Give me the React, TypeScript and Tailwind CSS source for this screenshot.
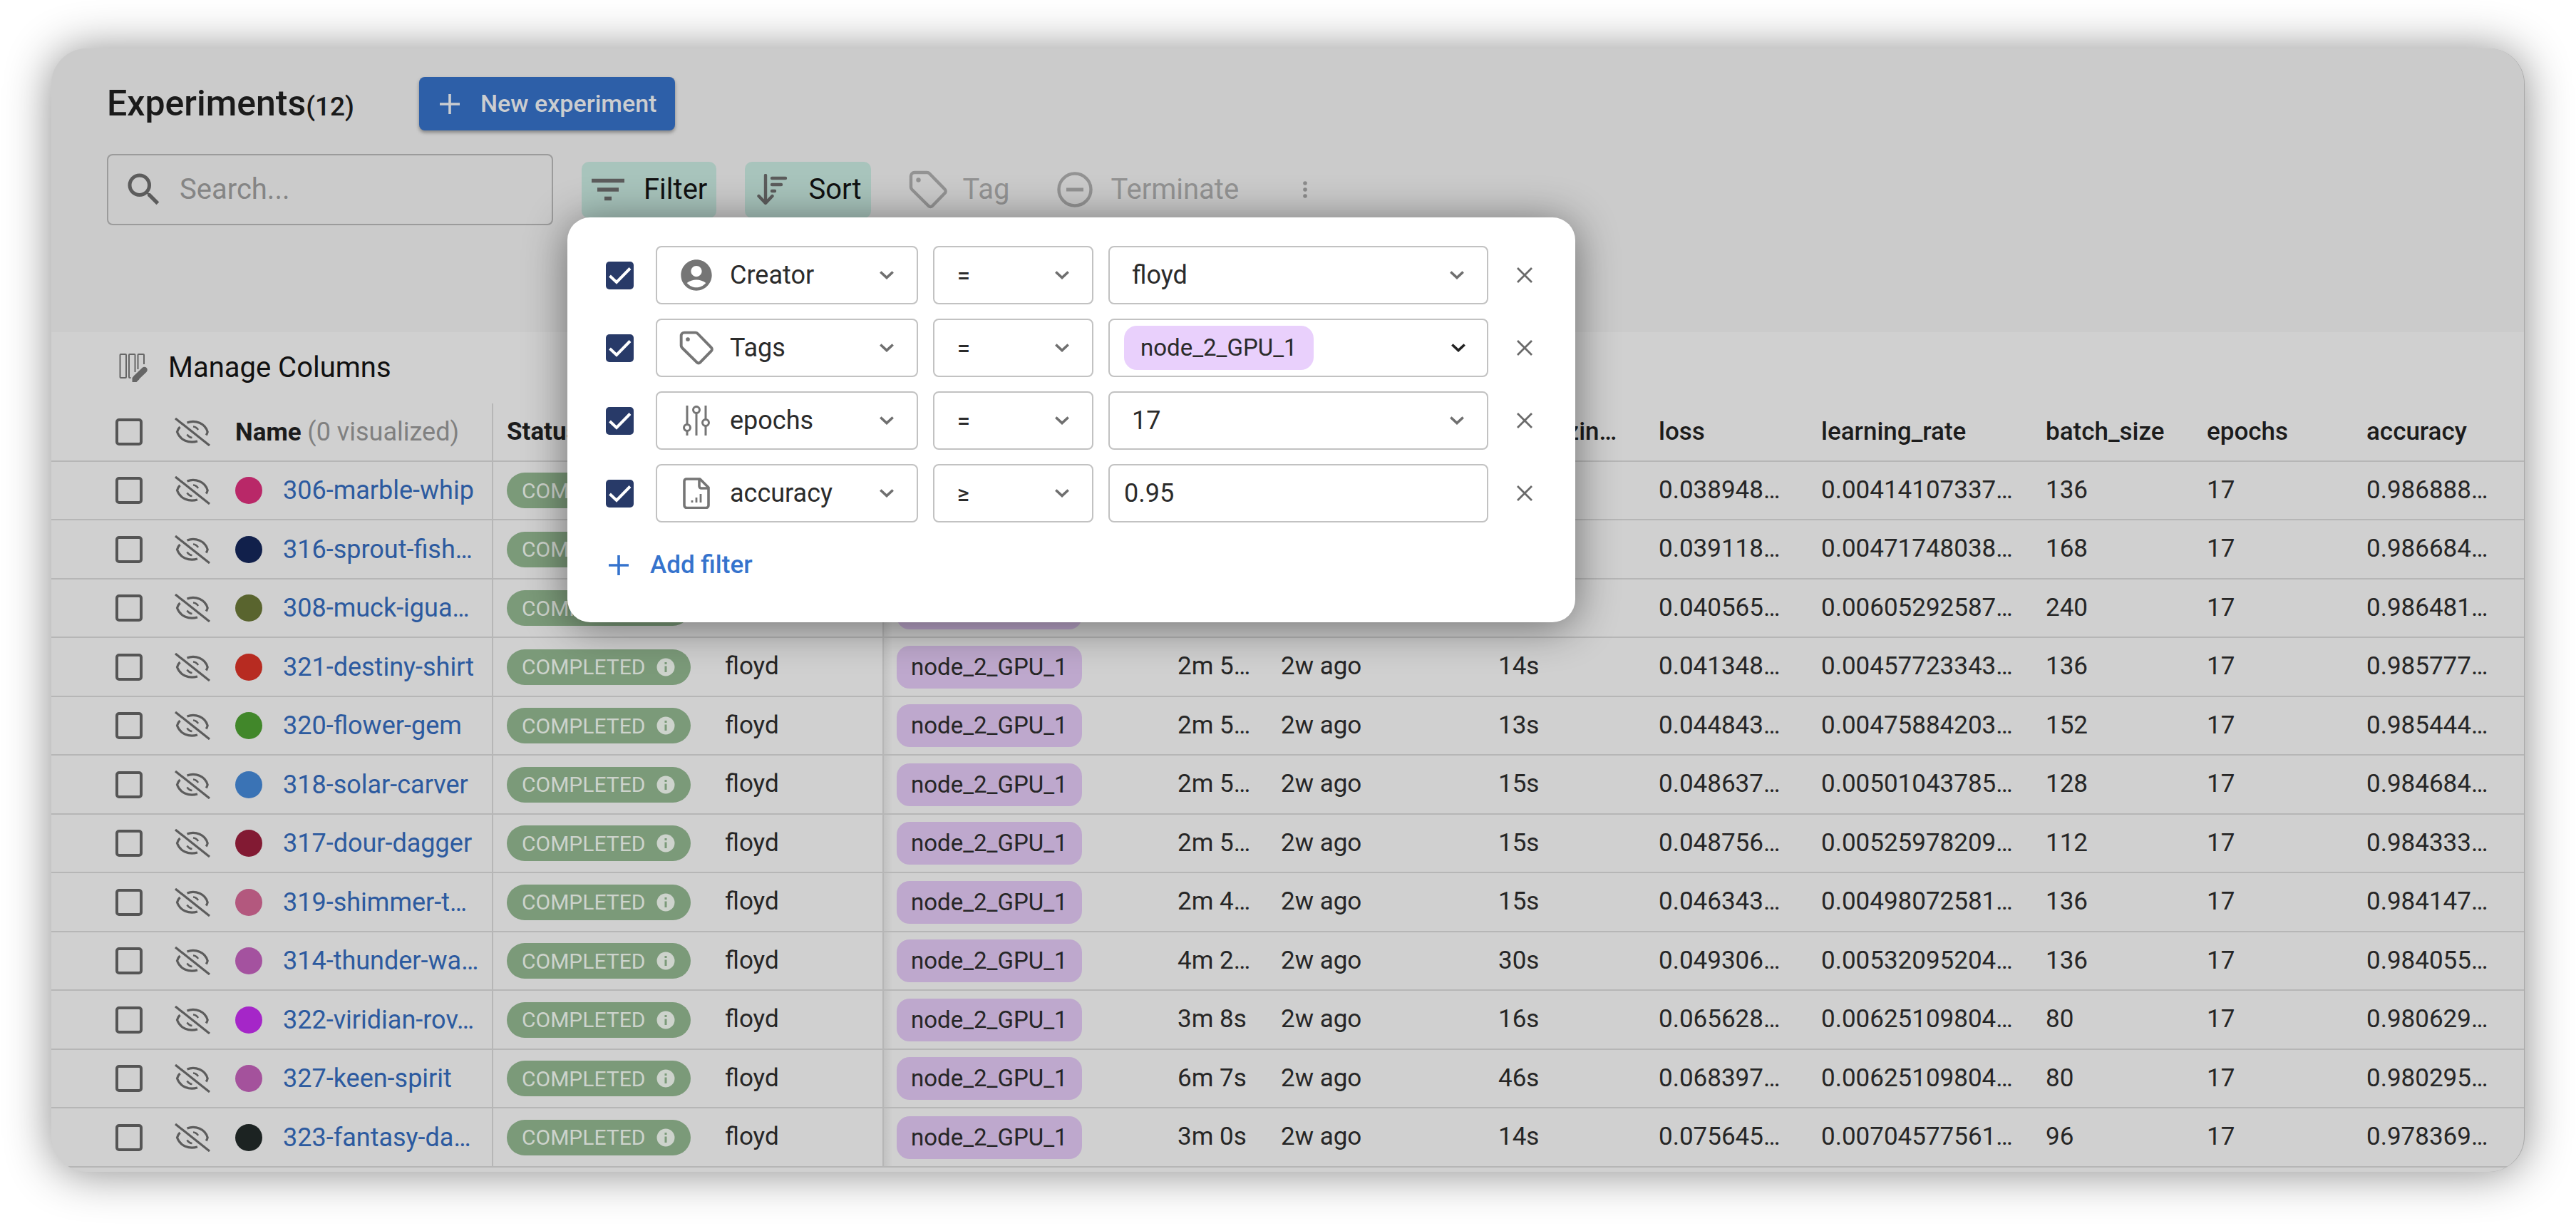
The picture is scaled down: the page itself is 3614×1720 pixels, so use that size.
import type { ReactNode } from "react";
import { MdAccountCircle, MdSearch } from "react-icons/md";

type Experiment = {
  name: string;
  dot: string;
  duration: string;
  init: string;
  loss: string;
  rate: string;
  batch: string;
  accuracy: string;
};

const experiments: Experiment[] = [
  { name: "306-marble-whip", dot: "bg-[#b92868]", duration: "2m 5…", init: "14s", loss: "0.038948…", rate: "0.00414107337…", batch: "136", accuracy: "0.986888…" },
  { name: "316-sprout-fish…", dot: "bg-[#11204b]", duration: "2m 5…", init: "14s", loss: "0.039118…", rate: "0.00471748038…", batch: "168", accuracy: "0.986684…" },
  { name: "308-muck-igua…", dot: "bg-[#59642e]", duration: "2m 5…", init: "15s", loss: "0.040565…", rate: "0.00605292587…", batch: "240", accuracy: "0.986481…" },
  { name: "321-destiny-shirt", dot: "bg-[#b72b21]", duration: "2m 5…", init: "14s", loss: "0.041348…", rate: "0.00457723343…", batch: "136", accuracy: "0.985777…" },
  { name: "320-flower-gem", dot: "bg-[#41872a]", duration: "2m 5…", init: "13s", loss: "0.044843…", rate: "0.00475884203…", batch: "152", accuracy: "0.985444…" },
  { name: "318-solar-carver", dot: "bg-[#3a73b5]", duration: "2m 5…", init: "15s", loss: "0.048637…", rate: "0.00501043785…", batch: "128", accuracy: "0.984684…" },
  { name: "317-dour-dagger", dot: "bg-[#821a33]", duration: "2m 5…", init: "15s", loss: "0.048756…", rate: "0.00525978209…", batch: "112", accuracy: "0.984333…" },
  { name: "319-shimmer-t…", dot: "bg-[#b3587e]", duration: "2m 4…", init: "15s", loss: "0.046343…", rate: "0.00498072581…", batch: "136", accuracy: "0.984147…" },
  { name: "314-thunder-wa…", dot: "bg-[#a4529f]", duration: "4m 2…", init: "30s", loss: "0.049306…", rate: "0.00532095204…", batch: "136", accuracy: "0.984055…" },
  { name: "322-viridian-rov…", dot: "bg-[#a526c8]", duration: "3m 8s", init: "16s", loss: "0.065628…", rate: "0.00625109804…", batch: "80", accuracy: "0.980629…" },
  { name: "327-keen-spirit", dot: "bg-[#a4529c]", duration: "6m 7s", init: "46s", loss: "0.068397…", rate: "0.00625109804…", batch: "80", accuracy: "0.980295…" },
  { name: "323-fantasy-da…", dot: "bg-[#1c2322]", duration: "3m 0s", init: "14s", loss: "0.075645…", rate: "0.00704577561…", batch: "96", accuracy: "0.978369…" },
];

function PlusIcon({ className }: { className?: string }) {
  return (
    <svg viewBox="0 0 28 28" className={className} fill="none" stroke="currentColor" strokeWidth="3.6" aria-hidden="true">
      <path d="M14 0v28M0 14h28" />
    </svg>
  );
}

function ChevronIcon({ className }: { className?: string }) {
  return (
    <svg viewBox="0 0 20 12" className={className} fill="none" stroke="currentColor" strokeWidth="3.6" aria-hidden="true">
      <path d="M1.3 1.5 10 9.6l8.700-8.100" />
    </svg>
  );
}

function CloseIcon() {
  return (
    <svg viewBox="0 0 22 22" className="size-[22px]" fill="none" stroke="currentColor" strokeWidth="2.8" aria-hidden="true">
      <path d="M1 1l20 20M21 1 1 21" />
    </svg>
  );
}

function TagIcon({ className }: { className?: string }) {
  return (
    <svg viewBox="0 0 54 54" className={className} fill="none" stroke="currentColor" strokeWidth="4.4" strokeLinejoin="round" aria-hidden="true">
      <path d="M3 8a5 5 0 0 1 5-5h17.500a5 5 0 0 1 3.500 1.500L50.500 26.500a4 4 0 0 1 0 5.500L33 50a3.600 3.600 0 0 1-5.200 0L4.500 27A5 5 0 0 1 3 23.500Z" />
      <circle cx="13.500" cy="13.500" r="3.200" fill="currentColor" stroke="none" />
    </svg>
  );
}

function FilterIcon() {
  return (
    <svg viewBox="0 0 48 34" className="h-[34px] w-12" stroke="currentColor" strokeWidth="5.400" aria-hidden="true">
      <path d="M1 4.500h46M9 17h30M19 29.500h10" />
    </svg>
  );
}

function SortIcon() {
  return (
    <svg viewBox="0 0 48 44" className="h-11 w-12" fill="none" stroke="currentColor" strokeWidth="4.400" aria-hidden="true">
      <path d="M16 2v38M6.500 31 16 41l9.500-10" strokeLinecap="round" strokeLinejoin="round" />
      <path d="M25 6h19M25 15h13M25 24h4" strokeLinecap="round" />
    </svg>
  );
}

function TerminateIcon() {
  return (
    <svg viewBox="0 0 50 50" className="size-[50px]" fill="none" stroke="currentColor" strokeWidth="4.400" aria-hidden="true">
      <circle cx="25" cy="25" r="22.500" />
      <path d="M13 25h24" strokeWidth="5" />
    </svg>
  );
}

function MoreIcon() {
  return (
    <svg viewBox="0 0 8 24" className="h-6 w-2" fill="currentColor" aria-hidden="true">
      <circle cx="4" cy="3" r="2.800" />
      <circle cx="4" cy="12" r="2.800" />
      <circle cx="4" cy="21" r="2.800" />
    </svg>
  );
}

function ColumnsIcon() {
  return (
    <svg viewBox="0 0 42 42" className="size-[42px]" fill="none" stroke="currentColor" strokeWidth="2" aria-hidden="true">
      <rect x="2.500" y="2" width="8.500" height="33" rx="1" />
      <path d="M17.500 35H16a1 1 0 0 1-1-1V3a1 1 0 0 1 1-1h6.500a1 1 0 0 1 1 1v24" />
      <path d="M27.500 23V3a1 1 0 0 1 1-1H35a1 1 0 0 1 1 1v13" />
      <path d="M25 35 36.500 24" strokeWidth="8.500" strokeLinecap="round" />
      <path d="M19.500 41v-6l4-4 6 6-4 4Z" fill="currentColor" stroke="none" />
    </svg>
  );
}

function HiddenIcon() {
  return (
    <svg viewBox="0 0 50 40" className="h-10 w-[50px]" fill="none" stroke="currentColor" strokeWidth="3.200" aria-hidden="true">
      <path d="M1 1l48 38" />
      <path d="M17.500 7C29 2.500 43 8 46.200 20c-.4 2-1 3-2 4.500" />
      <path d="M7.500 13C5 15.500 4 18 3.500 20 8 32 20 36.500 32 33" />
      <path d="M26 12.500c3.500 .3 5.500 2 7 4.500M17.500 23.500c1.500 2.500 3.500 4.200 7 4.500" strokeWidth="2.600" />
    </svg>
  );
}

function SlidersIcon() {
  return (
    <svg viewBox="0 0 44 44" className="size-11" fill="none" stroke="currentColor" strokeWidth="3" aria-hidden="true">
      <path d="M9 1v26M9 37v6M22 1v1M22 12v31M35 1v19M35 30v13" />
      <circle cx="9" cy="32" r="4.500" />
      <circle cx="22" cy="7" r="4.500" />
      <circle cx="35" cy="25" r="4.500" />
    </svg>
  );
}

function MetricFileIcon() {
  return (
    <svg viewBox="0 0 44 44" className="size-11" fill="none" stroke="currentColor" strokeWidth="3.600" strokeLinejoin="round" aria-hidden="true">
      <path d="M8 2h19l12 12v25a3.500 3.500 0 0 1-3.500 3.500H8.500A3.500 3.500 0 0 1 5 39V5a3 3 0 0 1 3-3Z" />
      <path d="M26 2v10a3 3 0 0 0 3 3h10" />
      <path d="M16 35v-3M22 35v-7M28 35V23" strokeWidth="2.800" />
    </svg>
  );
}

function InfoIcon() {
  return (
    <svg viewBox="0 0 26 26" className="size-[26px] shrink-0" aria-hidden="true">
      <circle cx="13" cy="13" r="12.500" fill="#cdd3cc" />
      <path d="M13 11.500V20M13 6v3" stroke="#7b9a79" strokeWidth="3" />
    </svg>
  );
}

function RowCheckbox({ label }: { label: string }) {
  return (
    <input
      type="checkbox"
      aria-label={label}
      className="block size-[38px] appearance-none rounded-[5px] border-4 border-[#555]"
    />
  );
}

function FilterCheckbox({ label }: { label: string }) {
  return (
    <span className="mr-[31px] grid size-[39px] shrink-0">
      <input
        type="checkbox"
        defaultChecked
        aria-label={label}
        className="col-start-1 row-start-1 size-[39px] appearance-none rounded-[5px] bg-[#283a68]"
      />
      <svg viewBox="0 0 39 39" className="pointer-events-none col-start-1 row-start-1 size-[39px]" fill="none" stroke="#fff" strokeWidth="4" aria-hidden="true">
        <path d="M5.500 20 15 29 34 9.500" />
      </svg>
    </span>
  );
}

function FieldSelect({ label, icon, value }: { label: string; icon: ReactNode; value: string }) {
  return (
    <label className="flex h-[82px] w-[368px] items-center rounded-lg border-2 border-[#c2c2c2] pr-8 pl-[29px]">
      <span className="mr-[21px] grid size-[52px] shrink-0 place-items-center text-[#757575]">{icon}</span>
      <select aria-label={label} defaultValue={value} className="min-w-0 flex-1 appearance-none bg-transparent text-[36px] text-[#2b2b2b]">
        <option>{value}</option>
      </select>
      <ChevronIcon className="h-3 w-5 text-[#6f6f6f]" />
    </label>
  );
}

function OperatorSelect({ label, value }: { label: string; value: string }) {
  return (
    <label className="flex h-[82px] w-[225px] items-center rounded-lg border-2 border-[#c2c2c2] pr-8 pl-8">
      <select aria-label={label} defaultValue={value} className="min-w-0 flex-1 appearance-none bg-transparent text-[32px] font-medium text-[#2b2b2b]">
        <option>{value}</option>
      </select>
      <ChevronIcon className="h-3 w-5 text-[#6f6f6f]" />
    </label>
  );
}

function ValueSelect({ label, value }: { label: string; value: string }) {
  return (
    <label className="flex h-[82px] flex-1 items-center rounded-lg border-2 border-[#c2c2c2] pr-8 pl-[31px]">
      <select aria-label={label} defaultValue={value} className="min-w-0 flex-1 appearance-none bg-transparent text-[36px] text-[#2b2b2b]">
        <option>{value}</option>
      </select>
      <ChevronIcon className="h-3 w-5 text-[#6f6f6f]" />
    </label>
  );
}

function FilterRow({ field, icon, operator, children }: { field: string; icon: ReactNode; operator: string; children: ReactNode }) {
  return (
    <div className="flex items-center">
      <FilterCheckbox label={`Enable ${field} filter`} />
      <div className="flex flex-1 items-center gap-[21px]">
        <FieldSelect label="Field" icon={icon} value={field} />
        <OperatorSelect label={`${field} operator`} value={operator} />
        {children}
      </div>
      <button type="button" aria-label={`Remove ${field} filter`} className="ml-[29px] grid size-11 place-items-center text-[#6a6a6a]">
        <CloseIcon />
      </button>
    </div>
  );
}

function FilterPopup() {
  return (
    <div className="absolute top-[237px] left-[724px] h-[568px] w-[1414px] rounded-[32px] bg-white pt-10 pr-[49px] pl-[54px] shadow-[0_6px_60px_rgba(0,0,0,0.48)]">
      <div className="flex flex-col gap-5">
        <FilterRow field="Creator" icon={<MdAccountCircle size={52} />} operator="=">
          <ValueSelect label="Creator value" value="floyd" />
        </FilterRow>
        <FilterRow field="Tags" icon={<TagIcon className="size-12" />} operator="=">
          <button type="button" aria-haspopup="listbox" className="flex h-[82px] flex-1 items-center justify-between rounded-lg border-2 border-[#c2c2c2] pr-[30px] pl-5">
            <span className="flex h-[62px] items-center rounded-[18px] bg-[#e9d0fc] px-[23px] text-[33px] text-[#2b2b2b]">node_2_GPU_1</span>
            <ChevronIcon className="h-3 w-5 text-[#222]" />
          </button>
        </FilterRow>
        <FilterRow field="epochs" icon={<SlidersIcon />} operator="=">
          <ValueSelect label="epochs value" value="17" />
        </FilterRow>
        <FilterRow field="accuracy" icon={<MetricFileIcon />} operator="≥">
          <input
            type="text"
            aria-label="accuracy value"
            defaultValue="0.95"
            className="h-[82px] min-w-0 flex-1 rounded-lg border-2 border-[#c2c2c2] bg-transparent px-5 text-[36px] text-[#2b2b2b]"
          />
        </FilterRow>
      </div>
      <button type="button" className="mt-9 flex h-12 items-center gap-[30px] pl-1 text-[35px] font-medium text-[#3573cd]">
        <PlusIcon className="size-7" />
        Add filter
      </button>
    </div>
  );
}

const bodyCell = "border-b-2 border-[#b6b6b6] p-0 pl-[19px] text-left";

function ExperimentTable() {
  return (
    <table className="w-full table-fixed border-separate border-spacing-0 text-[35px] whitespace-nowrap text-[#262626]">
      <colgroup>
        <col className="w-[148px]" />
        <col className="w-[100px]" />
        <col className="w-[372px]" />
        <col className="w-[306px]" />
        <col className="w-[242px]" />
        <col className="w-[393px]" />
        <col className="w-[145px]" />
        <col className="w-[305px]" />
        <col className="w-[225px]" />
        <col className="w-[228px]" />
        <col className="w-[315px]" />
        <col className="w-[226px]" />
        <col className="w-[224px]" />
        <col />
      </colgroup>
      <thead>
        <tr className="h-[82px] text-[#1c1c1c]">
          <th className="border-b-2 border-[#b6b6b6] p-0 pl-[90px]">
            <RowCheckbox label="Select all experiments" />
          </th>
          <th className="border-b-2 border-[#b6b6b6] p-0 pl-[25px] text-[#5c5c5c]">
            <HiddenIcon />
          </th>
          <th className="border-r-2 border-b-2 border-[#b6b6b6] p-0 pl-[10px] text-left font-bold">
            Name <span className="text-[36px] font-normal text-[#808080]">(0 visualized)</span>
          </th>
          <th className={`${bodyCell} font-bold`}>Status</th>
          <th className={`${bodyCell} border-r-2 font-medium`}>Creator</th>
          <th className={`${bodyCell} font-medium`}>Tags</th>
          <th className={`${bodyCell} font-medium`}>Time</th>
          <th className={`${bodyCell} font-medium`}>Started</th>
          <th className={`${bodyCell} font-medium`}>Initializin…</th>
          <th className={`${bodyCell} font-medium`}>loss</th>
          <th className={`${bodyCell} font-medium`}>learning_rate</th>
          <th className={`${bodyCell} font-medium`}>batch_size</th>
          <th className={`${bodyCell} font-medium`}>epochs</th>
          <th className={`${bodyCell} font-medium`}>accuracy</th>
        </tr>
      </thead>
      <tbody>
        {experiments.map((e) => (
          <tr key={e.name} className="h-[82px] even:h-[83px]">
            <td className="border-b-2 border-[#b6b6b6] p-0 pl-[90px]">
              <RowCheckbox label={`Select ${e.name}`} />
            </td>
            <td className="border-b-2 border-[#b6b6b6] p-0 pl-[25px]">
              <button type="button" aria-label={`Visualize ${e.name}`} className="block text-[#5c5c5c]">
                <HiddenIcon />
              </button>
            </td>
            <td className="border-r-2 border-b-2 border-[#b6b6b6] p-0 pl-[10px]">
              <div className="flex items-center gap-[29px]">
                <span className={`size-[38px] shrink-0 rounded-full ${e.dot}`} />
                <a href="#experiment" className="text-[36px] text-[#2c5a9f]">
                  {e.name}
                </a>
              </div>
            </td>
            <td className={bodyCell}>
              <span className="flex h-[50px] w-[258px] items-center justify-between rounded-full bg-[#7b9a79] pr-[22px] pl-[21px] text-[30px] text-[#cdd3cc]">
                COMPLETED
                <InfoIcon />
              </span>
            </td>
            <td className={`${bodyCell} border-r-2`}>floyd</td>
            <td className="border-b-2 border-[#b6b6b6] bg-[linear-gradient(to_right,#c2c2c2,#d0d0d0_12px)] p-0 pl-[18px]">
              <span className="flex h-[60px] w-[260px] items-center rounded-[18px] bg-[#bea8cd] pl-5 text-[33px]">node_2_GPU_1</span>
            </td>
            <td className={bodyCell}>{e.duration}</td>
            <td className={bodyCell}>2w ago</td>
            <td className={bodyCell}>{e.init}</td>
            <td className={bodyCell}>{e.loss}</td>
            <td className={bodyCell}>{e.rate}</td>
            <td className={bodyCell}>{e.batch}</td>
            <td className={bodyCell}>17</td>
            <td className={bodyCell}>{e.accuracy}</td>
          </tr>
        ))}
      </tbody>
    </table>
  );
}

export default function App() {
  return (
    <div className="min-h-screen bg-white px-[72px] pt-[68px] pb-[76px] font-['Roboto',sans-serif]">
      <main className="relative overflow-hidden rounded-[50px] border-r border-[#a8a8a8] bg-[#d0d0d0] pb-[6px] shadow-[0_2px_64px_rgba(0,0,0,0.46)]">
        <header className="h-[398px] bg-[#cbcbcb] pt-10 pl-[78px]">
          <div className="flex h-[75px] items-center">
            <h1 className="w-[438px] pt-1 text-[50px] leading-[60px] font-medium text-[#1a1a1a]">
              Experiments<span className="text-[37px]">(12)</span>
            </h1>
            <button type="button" className="flex h-[75px] items-center gap-[29px] rounded-lg bg-[#2d5fa8] pr-[26px] pl-[29px] text-[34px] font-medium text-[#cbcdd0] shadow-[0_3px_5px_rgba(0,0,0,0.35)]">
              <PlusIcon className="size-7" />
              New experiment
            </button>
          </div>
          <div className="mt-[33px] flex h-[100px] items-center gap-10 text-[40px]">
            <label className="flex h-[100px] w-[626px] items-center gap-5 rounded-lg border-2 border-[#9b9b9b] pl-5 text-[#5c5c5c]">
              <MdSearch size={60} className="shrink-0" />
              <input type="search" aria-label="Search experiments" placeholder="Search..." className="min-w-0 flex-1 bg-transparent text-[40px] placeholder:text-[#858585]" />
            </label>
            <button type="button" className="flex h-[79px] items-center gap-[26px] rounded-[10px] bg-[#a8c4bc] px-[13px] text-[#111]">
              <span className="text-[#5c5c5c]"><FilterIcon /></span>
              Filter
            </button>
            <button type="button" className="flex h-[79px] items-center gap-7 rounded-[10px] bg-[#a8c4bc] px-[13px] text-[#111]">
              <span className="text-[#5c5c5c]"><SortIcon /></span>
              Sort
            </button>
            <button type="button" className="flex h-[79px] items-center gap-[22px] px-[13px] text-[#939393]">
              <TagIcon className="size-[54px]" />
              Tag
            </button>
            <button type="button" className="flex h-[79px] items-center gap-[26px] px-[13px] text-[#939393]">
              <TerminateIcon />
              Terminate
            </button>
            <button type="button" aria-label="More actions" className="grid h-[79px] w-20 place-items-center text-[#8c8c8c]">
              <MoreIcon />
            </button>
          </div>
        </header>
        <div className="flex h-[100px] items-center pl-[94px]">
          <button type="button" className="flex items-center gap-7 text-[40px] text-[#111]">
            <span className="text-[#666]"><ColumnsIcon /></span>
            Manage Columns
          </button>
        </div>
        <ExperimentTable />
        <FilterPopup />
      </main>
    </div>
  );
}
